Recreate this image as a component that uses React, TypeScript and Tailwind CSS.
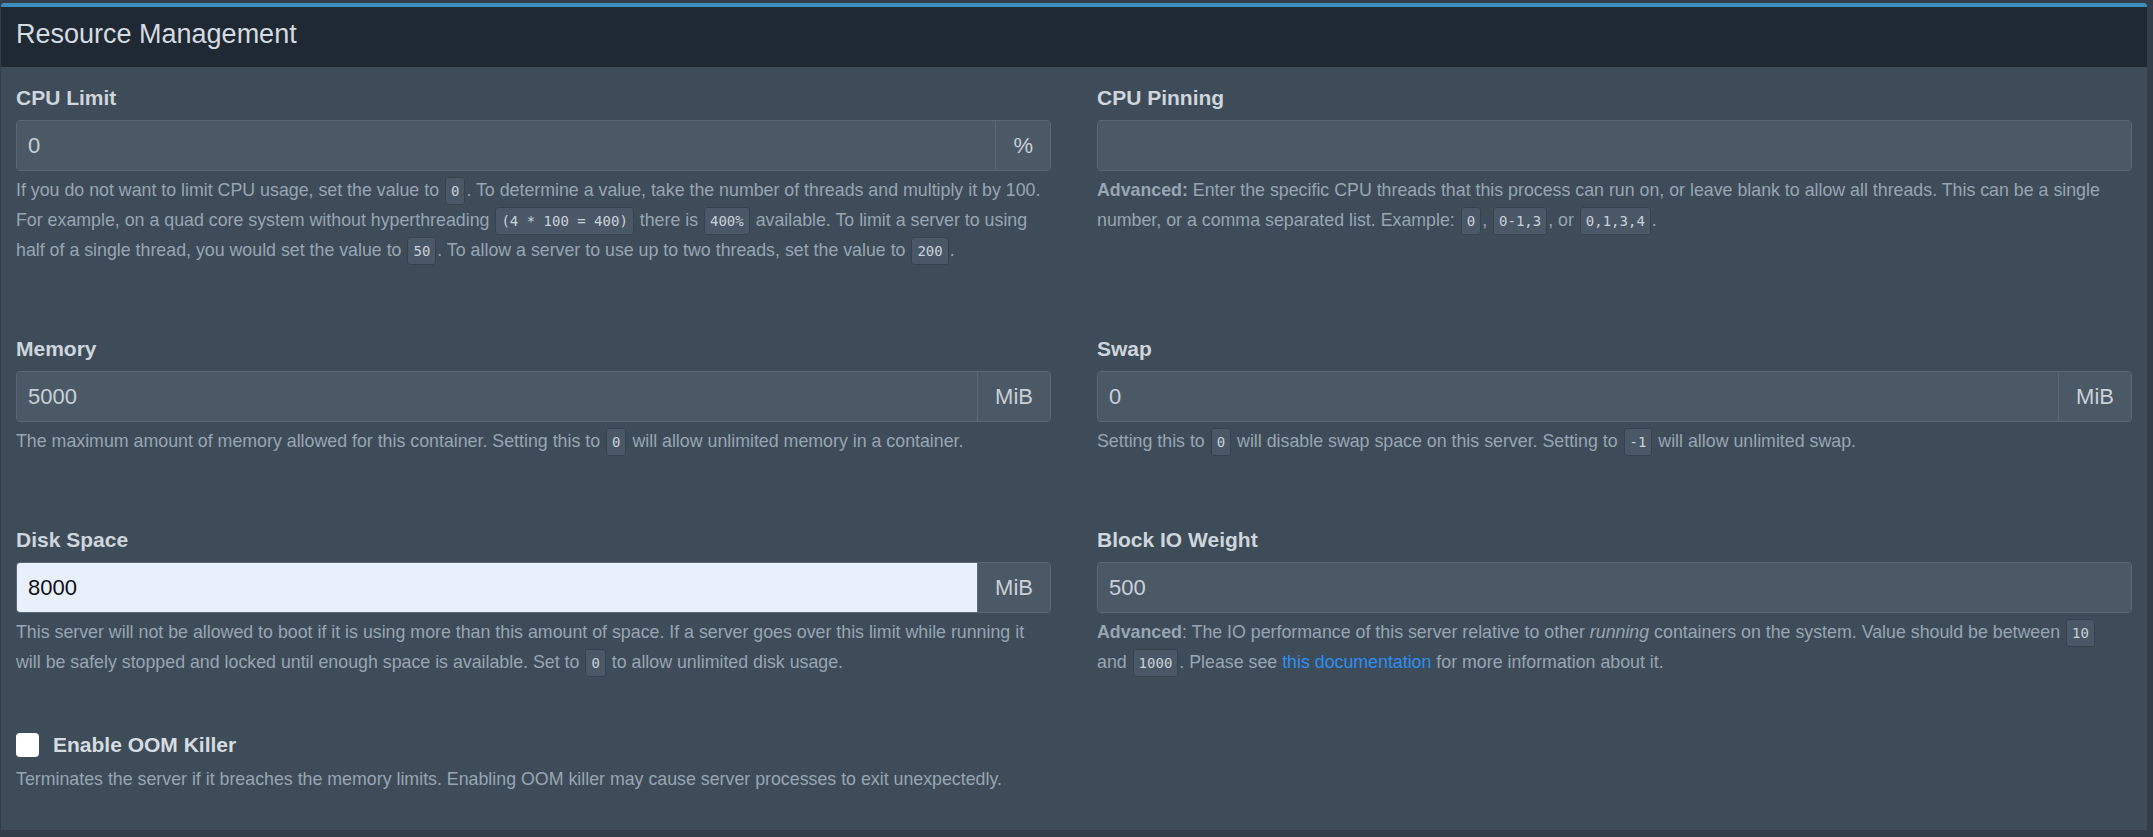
import React from "react";

function Code({ children }: { children: React.ReactNode }) {
  return (
    <code className="font-['DejaVu_Sans_Mono',monospace] text-[14px] leading-none text-[#c9d1d9] bg-[#4a5766] border border-[#35414c] rounded-[3px] px-[5px] py-[5px] mx-[1px]">
      {children}
    </code>
  );
}

function InputGroup({
  value,
  addon,
  autofill,
}: {
  value: string;
  addon?: string;
  autofill?: boolean;
}) {
  return (
    <div className="mt-[10px] flex h-[51px] rounded-[4px] border border-[#5a6876] overflow-hidden">
      <input
        readOnly
        value={value}
        className={
          "flex-1 min-w-0 h-full px-[11px] text-[22px] outline-none font-['Liberation_Sans',Arial,sans-serif] " +
          (autofill ? "bg-[#e8f0fe] text-[#111]" : "bg-[#4b5967] text-[#c9d0d7]")
        }
      />
      {addon ? (
        <div className="flex items-center border-l border-[#5a6876] bg-[#4b5967] px-[17px] text-[22px] text-[#c9d0d7]">
          {addon}
        </div>
      ) : null}
    </div>
  );
}

function Field({
  label,
  value,
  addon,
  autofill,
  children,
}: {
  label: string;
  value: string;
  addon?: string;
  autofill?: boolean;
  children: React.ReactNode;
}) {
  return (
    <div>
      <div className="text-[21px] font-bold leading-[24px] text-[#cfd5dc]">{label}</div>
      <InputGroup value={value} addon={addon} autofill={autofill} />
      <p className="mt-[4px] text-[17.8px] leading-[30px] text-[#98a5b2] whitespace-nowrap">{children}</p>
    </div>
  );
}

export default function App() {
  return (
    <div className="min-h-[837px] bg-[#323d48] pt-[3px] font-['Liberation_Sans',Arial,sans-serif]">
      <div className="ml-[1px] w-[2146px] rounded-t-[3px] border-t-4 border-[#3c8dbc] bg-[#3e4c59]">
        <div className="flex h-[60px] items-center bg-[#1f2933] px-[15px] pb-[5px] text-[27px] text-[#d5dbe1]">
          Resource Management
        </div>
        <div className="px-[15px] pt-[19px] pb-[36px]">
          <div className="grid grid-cols-2 gap-x-[46px]">
            <Field label="CPU Limit" value="0" addon="%">
              If you do not want to limit CPU usage, set the value to <Code>0</Code>. To determine a value, take the number of threads and multiply it by 100.
              <br />
              For example, on a quad core system without hyperthreading <Code>(4 * 100 = 400)</Code> there is <Code>400%</Code> available. To limit a server to using
              <br />
              half of a single thread, you would set the value to <Code>50</Code>. To allow a server to use up to two threads, set the value to <Code>200</Code>.
            </Field>
            <Field label="CPU Pinning" value="">
              <strong className="font-bold">Advanced:</strong> Enter the specific CPU threads that this process can run on, or leave blank to allow all threads. This can be a single
              <br />
              number, or a comma separated list. Example: <Code>0</Code>, <Code>0-1,3</Code>, or <Code>0,1,3,4</Code>.
            </Field>
          </div>

          <div className="mt-[72px] grid grid-cols-2 gap-x-[46px]">
            <Field label="Memory" value="5000" addon="MiB">
              The maximum amount of memory allowed for this container. Setting this to <Code>0</Code> will allow unlimited memory in a container.
            </Field>
            <Field label="Swap" value="0" addon="MiB">
              Setting this to <Code>0</Code> will disable swap space on this server. Setting to <Code>-1</Code> will allow unlimited swap.
            </Field>
          </div>

          <div className="mt-[72px] grid grid-cols-2 gap-x-[46px]">
            <Field label="Disk Space" value="8000" addon="MiB" autofill>
              This server will not be allowed to boot if it is using more than this amount of space. If a server goes over this limit while running it
              <br />
              will be safely stopped and locked until enough space is available. Set to <Code>0</Code> to allow unlimited disk usage.
            </Field>
            <Field label="Block IO Weight" value="500">
              <strong className="font-bold">Advanced</strong>: The IO performance of this server relative to other <em>running</em> containers on the system. Value should be between <Code>10</Code>
              <br />
              and <Code>1000</Code>. Please see <a className="text-[#2f8ef0]">this documentation</a> for more information about it.
            </Field>
          </div>

          <div className="mt-[56px]">
            <div className="flex items-center gap-[14px]">
              <div className="h-[24px] w-[23px] rounded-[4px] bg-white" />
              <span className="text-[21px] font-bold leading-[24px] text-[#d7dce1]">Enable OOM Killer</span>
            </div>
            <p className="mt-[7px] text-[17.8px] leading-[30px] text-[#98a5b2] whitespace-nowrap">
              Terminates the server if it breaches the memory limits. Enabling OOM killer may cause server processes to exit unexpectedly.
            </p>
          </div>
        </div>
      </div>
    </div>
  );
}
